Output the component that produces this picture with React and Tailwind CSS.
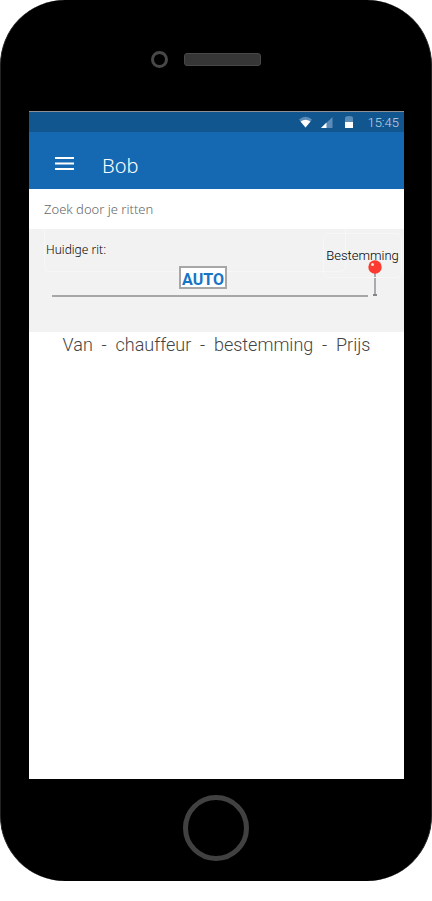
function StatusBar() {
  return (
    <div className="flex h-[21px] items-center justify-end border-t border-[#8f8f94] bg-[#12568f] pr-[5px] text-[#c4d5e5]">
      <svg className="h-4 w-[54px]" viewBox="0 0 54 16" aria-hidden="true">
        <path d="M0 5.500Q6.500 0 13 5.500L6.500 13.500Z" fill="#5b8bb7" />
        <path d="M1.500 7.500Q6.500 4 11.500 7.500L6.500 13.500Z" fill="#fff" />
        <path d="M22 14 33.500 3v11Z" fill="#5b8bb7" />
        <path d="M22 14 27.500 8.500v5.500Z" fill="#fff" />
        <path d="M46 8V4q0-2 4-2T54 4v4Z" fill="#5b8bb7" />
        <path d="M46 8h8v6h-8Z" fill="#fff" />
      </svg>
      <time className="mt-0.5 ml-[14px] font-['Roboto',sans-serif] text-[13px] leading-5 font-light">15:45</time>
    </div>
  );
}

function AppBar() {
  return (
    <header className="flex h-[57px] items-center bg-[#1569b2] pt-2 pl-[26px] text-white">
      <button type="button" aria-label="Menu" className="-mt-0.5 cursor-pointer">
        <svg className="h-[14px] w-[19px]" viewBox="0 0 19 14" fill="#fff" aria-hidden="true">
          <path d="M0 0h19v2H0zM0 5.500h19v2H0zM0 11h19v2H0z" />
        </svg>
      </button>
      <h1 className="mt-0.5 ml-7 font-['Noto_Sans',sans-serif] text-[20px] leading-7 font-light">Bob</h1>
    </header>
  );
}

function DestinationPin() {
  return (
    <svg className="absolute top-[31px] right-[22px] h-9 w-[14px]" viewBox="0 0 14 36" aria-hidden="true">
      <path d="M6 12h2v23H6z" fill="#aaaaaf" />
      <path d="M5 34h4v2H5z" fill="#858589" />
      <path d="M4 17h6v1H4z" fill="#f7f7f7" />
      <circle cx="7" cy="7" r="6.700" fill="#fc3a30" />
      <circle cx="4.500" cy="4.500" r="1.500" fill="#ffe5e2" />
    </svg>
  );
}

function CurrentRide() {
  return (
    <section className="relative h-[103px] bg-[#f2f2f2]">
      <h2 className="mr-[58px] ml-[15px] h-[43px] rounded-b-md border-x border-b border-[#f7f7f7] pt-[11px] pl-px font-['Noto_Sans',sans-serif] text-[12px] leading-5 font-light text-black">
        Huidige rit:
      </h2>
      <div className="absolute top-1 right-0.5 flex h-[45px] w-[79px] justify-center rounded-md border border-[#f7f7f7] pt-3 font-['Roboto',sans-serif] text-[13px] leading-5 font-light whitespace-nowrap text-black">
        Bestemming
      </div>
      <div className="mt-[23px] mr-9 ml-[23px] h-0.5 bg-[#a7a7a7]" />
      <div className="absolute top-[37px] left-[150px] flex h-[23px] w-12 items-center justify-center border-2 border-[#a7a7a7] bg-white pt-1 font-['Roboto',sans-serif] text-[16px] leading-5 font-bold text-[#1675c4]">
        AUTO
      </div>
      <DestinationPin />
    </section>
  );
}

export default function App() {
  return (
    <div className="min-h-[901px] bg-white">
      <div className="mx-auto w-full max-w-[432px] rounded-[65px] border-x border-[#222] bg-black pr-[27px] pl-7">
        <div className="flex h-[111px] items-center gap-4 pt-2 pl-[122px]">
          <div className="size-[17px] rounded-full border-3 border-[#484848]" />
          <div className="h-[13px] w-[77px] rounded-[3px] border border-[#484848] bg-[#363636]" />
        </div>
        <main className="min-h-[668px] bg-white">
          <StatusBar />
          <AppBar />
          <input
            type="search"
            aria-label="Zoek door je ritten"
            placeholder="Zoek door je ritten"
            className="block h-10 w-full px-[15px] font-['Noto_Sans',sans-serif] text-[13px] font-light outline-none placeholder:text-[#666]"
          />
          <CurrentRide />
          <p className="text-center font-['Roboto',sans-serif] text-[18px] leading-[26px] font-light whitespace-pre text-[#444]">
            {'Van  -  chauffeur  -  bestemming  -  Prijs'}
          </p>
        </main>
        <div className="flex h-[102px] justify-center pt-4 pr-0.5">
          <button
            type="button"
            aria-label="Home"
            className="size-[66px] cursor-pointer rounded-full border-5 border-[#414141]"
          />
        </div>
      </div>
    </div>
  );
}
